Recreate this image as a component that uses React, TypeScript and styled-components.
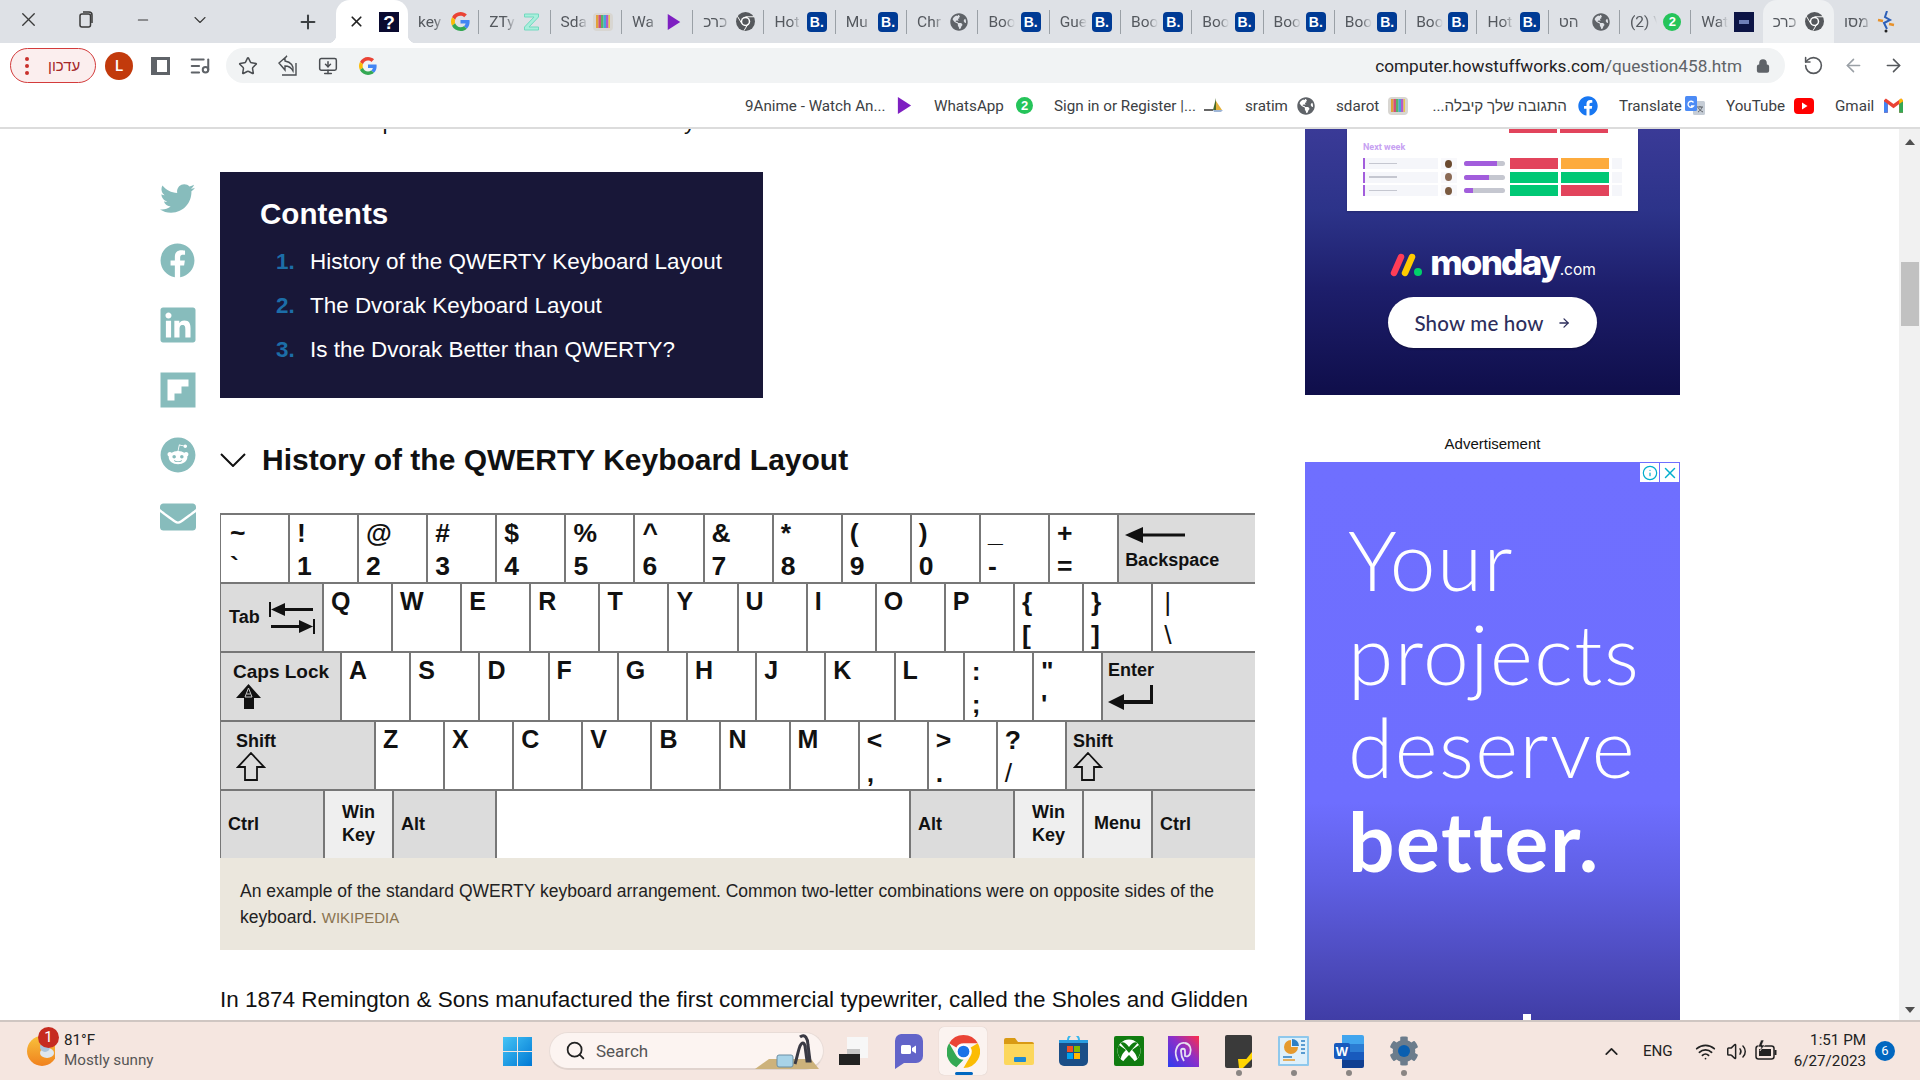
import React from "react";
import styled, { createGlobalStyle } from "styled-components";
import { ChevronDown, ChevronUp, Minus, Plus, X, Star, Lock, RotateCcw, ArrowLeft, ArrowRight, Search as SearchIcon, Volume2, Wifi, MonitorDown, Info, ListMusic, ArrowRight as ShowArrow } from "lucide-react";
import { FaTwitter, FaFacebook, FaLinkedin, FaFlipboard, FaReddit, FaEnvelope, FaGlobeAmericas, FaCog } from "react-icons/fa";

const GlobalStyle = createGlobalStyle`
  html, body { margin: 0; padding: 0; background: #fff; overflow: hidden; }
  * { box-sizing: border-box; }
  body { font-family: "Liberation Sans", Arial, sans-serif; }
`;

const ui = `Roboto, "Liberation Sans", sans-serif`;

const Page = styled.div`
  width: 1920px; height: 1080px; display: flex; flex-direction: column; overflow: hidden; background: #fff;
`;

/* ---------- tab strip ---------- */
const TabStrip = styled.div`
  height: 43px; flex: none; display: flex; align-items: stretch; background: #dee1e6; color: #3c4043; font-family: ${ui};
`;
const WinButton = styled.div`
  width: 57px; display: flex; align-items: center; justify-content: center; color: #3a3a3a; padding-bottom: 4px;
`;
const NewTab = styled.div`
  width: 40px; margin: 0 8px 0 60px; display: flex; align-items: center; justify-content: center; color: #3c4043;
`;
const ActiveTab = styled.div`
  position: relative; flex: 0 0 72px; background: #fff; border-radius: 14px 14px 0 0; display: flex; align-items: center; padding: 0 9px 0 12px; justify-content: space-between;
  &::before, &::after { content: ""; position: absolute; bottom: 0; width: 8px; height: 8px; }
  &::before { left: -8px; background: radial-gradient(circle at 0 0, transparent 8px, #fff 8.5px); }
  &::after { right: -8px; background: radial-gradient(circle at 100% 0, transparent 8px, #fff 8.5px); }
`;
const QuestionFav = styled.span`
  width: 20px; height: 20px; background: #0a0a30; color: #fff; font: 700 19px/22px "Liberation Sans", sans-serif; text-align: center; overflow: hidden;
`;
const Tab = styled.div<{ $light?: boolean; $plain?: boolean }>`
  position: relative; flex: 0 0 71.3px; display: flex; align-items: center; justify-content: space-between; padding: 0 9px 0 10px;
  background: ${(p) => (p.$light ? "#eef0f2" : "transparent")};
  border-radius: ${(p) => (p.$light ? "14px 14px 0 0" : "0")};
  &::after {
    content: ""; position: absolute; right: 0; top: 10px; height: 24px; width: 1px;
    background: ${(p) => (p.$light || p.$plain ? "transparent" : "#9aa0a6")};
  }
`;
const TabTitle = styled.span`
  width: 27px; overflow: hidden; white-space: nowrap; font-size: 15.5px; color: #54585e;
  -webkit-mask-image: linear-gradient(to right, #000 60%, transparent 100%);
  mask-image: linear-gradient(to right, #000 60%, transparent 100%);
`;
const BookingFav = styled.span`
  width: 20px; height: 20px; flex: none; border-radius: 4px; background: #003b95; color: #fff; font: 700 14px/20px "Liberation Sans", sans-serif; text-align: center;
`;
const WaBadge = styled.span<{ $size?: number }>`
  width: ${(p) => p.$size ?? 18}px; height: ${(p) => p.$size ?? 18}px; flex: none; border-radius: 50%; background: #25c45a; color: #fff; font: 700 13px/${(p) => p.$size ?? 18}px "Liberation Sans", sans-serif; text-align: center;
`;
const FavSlot = styled.span`
  width: 20px; height: 20px; flex: none; display: flex; align-items: center; justify-content: center;
`;

/* ---------- toolbar ---------- */
const Toolbar = styled.div`
  height: 45px; flex: none; display: flex; align-items: center; padding: 0 7px 0 10px; background: #fff; font-family: ${ui};
`;
const UpdatePill = styled.div`
  width: 86px; height: 35px; border: 1.5px solid #d33b3b; border-radius: 18px; background: #fbeeee; color: #a52727; display: flex; align-items: center; padding-left: 14px; gap: 19px; font: 15px "Liberation Sans", sans-serif;
`;
const PillDots = styled.span`
  display: flex; flex-direction: column; gap: 3px;
  i { width: 4px; height: 4px; border-radius: 50%; background: #c9302c; display: block; }
`;
const Avatar = styled.div`
  width: 28px; height: 28px; margin-left: 9px; border-radius: 50%; background: #c23a0c; color: #fff; font: 500 15px/28px ${ui}; text-align: center;
`;
const ToolButton = styled.div`
  width: 39px; display: flex; align-items: center; justify-content: center; color: #5f6368;
`;
const NavButton = styled.div<{ $muted?: boolean }>`
  width: 40px; display: flex; align-items: center; justify-content: center; color: ${(p) => (p.$muted ? "#9aa0a6" : "#55585c")};
`;
const ToolGroup = styled.div`
  display: flex; margin-left: 8px;
`;
const Omnibox = styled.div`
  flex: 1; height: 35px; margin: 0 8px 0 7px; padding: 0 15px 0 2px; border-radius: 18px; background: #f1f3f4; display: flex; align-items: center; color: #4a4d51;
`;
const OmniIcon = styled.div`
  width: 40px; display: flex; align-items: center; justify-content: center;
`;
const Url = styled.div`
  margin-left: auto; font-size: 17.2px; white-space: nowrap; color: #1f2124;
  span { color: #5f6368; }
`;
const LockBox = styled.div`
  margin-left: 14px; color: #5f6368; display: flex;
`;

/* ---------- bookmarks ---------- */
const Bookmarks = styled.div`
  height: 41px; flex: none; display: flex; align-items: center; justify-content: flex-end; padding: 0 17px 4px 0; border-bottom: 2px solid #dcdcdc; font-family: ${ui}; background: #fff;
`;
const Bookmark = styled.div`
  display: flex; align-items: center; gap: 11px; margin-left: 21px;
`;
const BookmarkLabel = styled.span<{ $w: number }>`
  width: ${(p) => p.$w}px; font-size: 15.2px; color: #3c4043; white-space: nowrap;
`;

/* ---------- main ---------- */
const Main = styled.div`
  flex: 1; min-height: 0; display: flex; overflow: hidden; padding-left: 160px; background: #fff;
`;
const ShareRail = styled.div`
  width: 35px; flex: none; display: flex; flex-direction: column; align-items: center; gap: 30px; padding-top: 55px; color: #87bcbc;
`;
const ShareIcon = styled.div<{ $h: number }>`
  height: ${(p) => p.$h}px; width: 35px; flex: none; display: flex; align-items: center; justify-content: center; svg { flex: none; }
`;
const Article = styled.div`
  width: 1035px; flex: none; margin: -20px 0 0 25px; color: #111;
`;
const LeadLine = styled.p`
  margin: 0; height: 26px; font-size: 22.5px; line-height: 26px; white-space: nowrap;
`;
const Contents = styled.nav`
  width: 543px; height: 226px; margin-top: 37px; padding: 22px 0 0 40px; background: #181738; color: #fff;
`;
const ContentsTitle = styled.h2`
  margin: 0 0 6px; font-size: 29.6px; line-height: 40px; font-weight: 700;
`;
const ContentsList = styled.ol`
  list-style: none; margin: 0; padding: 0 0 0 16px;
`;
const ContentsItem = styled.li`
  display: flex; height: 44px; align-items: center; font-size: 22.45px;
  b { width: 34px; color: #1c6ea8; font-weight: 700; }
`;
const SectionHeading = styled.div`
  display: flex; align-items: center; height: 40px; margin-top: 42px; gap: 16px;
  h3 { margin: 0; font-size: 30px; line-height: 40px; font-weight: 700; color: #111; }
`;
const Figure = styled.figure`
  margin: 33px 0 0; width: 1035px;
`;
const Keyboard = styled.div`
  height: 345px; overflow: hidden; border-top: 2px solid #777; border-left: 1px solid #777; background: #fff; color: #111;
  display: flex; flex-direction: column;
`;
const KeyRow = styled.div`
  height: 69px; flex: none; display: flex; border-bottom: 2px solid #777;
`;
const Key = styled.div<{ $w?: number; $tone?: "gray" | "light"; $last?: boolean; $pad?: number }>`
  flex: ${(p) => (p.$last ? "1 1 0" : `0 0 ${p.$w ?? 69.1}px`)};
  min-width: 0;
  border-right: ${(p) => (p.$last ? "none" : "2px solid #777")};
  background: ${(p) => (p.$tone === "gray" ? "#dcdcdc" : p.$tone === "light" ? "#efefef" : "#fff")};
  padding-left: ${(p) => p.$pad ?? 7}px; font-weight: 700; position: relative;
`;
const Letter = styled.div`
  font-size: 25px; line-height: 30px; padding-top: 2px;
`;
const Stacked = styled.div`
  display: flex; flex-direction: column; font-size: 26.5px; line-height: 33px; padding-top: 2px;
`;
const ThinMark = styled.span`
  font-weight: 400;
`;
const FnLabel = styled.div<{ $size?: number }>`
  font-size: ${(p) => p.$size ?? 18}px; line-height: 22px;
`;
const FnStack = styled.div<{ $pad?: number; $gap?: number; $left?: number }>`
  display: flex; flex-direction: column; align-items: flex-start; gap: ${(p) => p.$gap ?? 3}px; padding-top: ${(p) => p.$pad ?? 6}px; margin-left: ${(p) => p.$left ?? 2}px;
`;
const CapsIconBox = styled.div`
  display: flex; margin: 1px 0 0 3px;
`;
const TabFace = styled.div`
  display: flex; align-items: center; height: 100%; gap: 9px; padding-left: 1px; font-size: 18px;
`;
const BottomCenter = styled.div`
  display: flex; align-items: center; height: 100%; font-size: 18px;
`;
const WinFace = styled.div`
  height: 100%; margin-left: -7px; display: flex; flex-direction: column; align-items: center; justify-content: center; font-size: 18px; line-height: 23px; padding-bottom: 2px;
`;
const Caption = styled.figcaption`
  height: 92px; padding: 20px 20px 0; background: #ebe7dd; font-size: 17.5px; line-height: 26px; color: #222;
  a { color: #8a7450; font-size: 15px; }
`;
const BodyText = styled.p`
  margin: 32px 0 0; font-size: 22.5px; line-height: 36px; white-space: nowrap; color: #111;
`;

/* ---------- ads ---------- */
const Aside = styled.aside`
  width: 375px; flex: none; margin-left: 50px; display: flex; flex-direction: column;
`;
const MondayAd = styled.div`
  height: 266px; flex: none; display: flex; flex-direction: column; align-items: center; background: linear-gradient(#3a3a97 0%, #2c3389 31%, #1d1e6b 60%, #0f0e4a 100%);
`;
const AdCard = styled.div`
  width: 291px; height: 82px; background: #fff; padding: 0 16px; display: flex; flex-direction: column; box-shadow: 0 1px 2px rgba(0,0,0,.2);
`;
const NextWeek = styled.div`
  font: 700 9px/12px Roboto, sans-serif; color: #c7a1f2; margin-top: 2px; height: 23px; padding-top: 6px;
`;
const TopStatus = styled.div`
  display: flex; height: 4px; margin-left: 146px; gap: 3px;
  i { width: 48px; background: #e2445c; display: block; }
`;
const BoardRow = styled.div`
  display: flex; height: 11px; align-items: stretch; margin-bottom: 2.5px; gap: 3px;
`;
const BoardName = styled.div`
  width: 75px; border-left: 2px solid #a25ddc; background: #f5f6fa; display: flex; align-items: center; padding-left: 4px;
  i { width: 28px; height: 1.5px; background: #c5c7d0; display: block; }
`;
const BoardFace = styled.div<{ $c: string }>`
  width: 16px; display: flex; align-items: center; justify-content: center; background: #f8f8fb;
  i { width: 7px; height: 8px; border-radius: 50%; background: ${(p) => p.$c}; display: block; }
`;
const BoardProgress = styled.div`
  width: 42px; height: 5px; margin: 3px 2px 0 4px; background: #c5c7d0; border-radius: 3px; overflow: hidden;
`;
const BoardFill = styled.div`
  height: 100%; background: #a25ddc;
`;
const BoardCell = styled.div<{ $c: string }>`
  width: 48px; background: ${(p) => p.$c};
`;
const BoardEnd = styled.div`
  width: 10px; background: #f5f6fa;
`;
const MondayLogo = styled.div`
  display: flex; align-items: baseline; margin-top: 29px; height: 44px; color: #fff; gap: 0;
  svg { align-self: center; margin-right: 7px; margin-top: 6px; }
  b { font: 800 35px/44px Inter, sans-serif; letter-spacing: -1.8px; }
  span { font: 400 15.5px/20px Inter, sans-serif; }
`;
const ShowButton = styled.div`
  width: 209px; height: 51px; margin-top: 13px; border-radius: 26px; background: #fff; color: #2d2e5c; display: flex; align-items: center; justify-content: center; gap: 13px; font: 500 20.5px Lato, sans-serif; letter-spacing: .2px; box-shadow: 0 1px 2px rgba(0,0,0,.3);
`;
const AdLabel = styled.div`
  height: 67px; flex: none; padding-top: 39px; text-align: center; font-size: 15px; line-height: 20px; color: #111;
`;
const ProjectsAd = styled.div`
  position: relative; flex: 1; min-height: 0; padding: 51px 0 0 43px; color: #fff; overflow: hidden;
  background: linear-gradient(#6f6fff 0%, #6e6eff 61%, #5f5fe4 75%, #4d4bbd 90%, #403da6 100%);
  font-family: Lato, sans-serif; font-size: 82px; line-height: 93.5px; font-weight: 300; letter-spacing: 1.5px;
`;
const AdLine = styled.div<{ $bold?: boolean }>`
  font-weight: ${(p) => (p.$bold ? 700 : 300)}; white-space: nowrap;
`;
const AdStub = styled.div`
  position: absolute; left: 218px; bottom: 0; width: 8px; height: 6px; background: #fff;
`;
const AdChoices = styled.div`
  position: absolute; top: 1px; right: 1px; display: flex; gap: 1px;
`;
const AdChoice = styled.div`
  width: 19px; height: 19px; background: #fff; color: #00aecd; display: flex; align-items: center; justify-content: center;
`;

/* ---------- scrollbar ---------- */
const Scrollbar = styled.div`
  width: 21px; flex: none; margin-left: auto; background: #f1f1f1; display: flex; flex-direction: column; align-items: center;
`;
const ScrollUp = styled.div`
  width: 0; height: 0; margin-top: 10px; border: 5px solid transparent; border-top: 0; border-bottom: 6px solid #505050;
`;
const ScrollThumb = styled.div`
  width: 18px; height: 64px; margin-top: 117px; background: #c1c1c1;
`;
const ScrollDown = styled.div`
  width: 0; height: 0; margin-top: auto; margin-bottom: 7px; border: 5px solid transparent; border-bottom: 0; border-top: 6px solid #505050;
`;

/* ---------- taskbar ---------- */
const Taskbar = styled.div`
  height: 60px; flex: none; display: flex; align-items: center; background: #f5e6e0; border-top: 2px solid #cfc6c2; font-family: ${ui}; color: #222; position: relative;
`;
const Weather = styled.div`
  width: 503px; flex: none; display: flex; align-items: center; padding-left: 27px; gap: 9px; position: relative;
`;
const WeatherBadge = styled.div`
  position: absolute; left: 38px; top: -3px; width: 21px; height: 21px; border-radius: 50%; background: #c62b20; color: #fff; font: 400 15px/21px ${ui}; text-align: center;
`;
const WeatherText = styled.div`
  display: flex; flex-direction: column; font-size: 15.2px; line-height: 20px; padding-bottom: 2px;
  small { font-size: 15.2px; color: #555; }
`;
const SearchBox = styled.div`
  width: 275px; height: 38px; margin: 0 2px 0 17px; border-radius: 19px; background: #fcf4f1; border: 1px solid #e8dcd7; border-bottom: 2px solid #e0d3ce; display: flex; align-items: center; padding-left: 15px; gap: 10px; font-size: 17px; color: #555; position: relative;
  svg.art { position: absolute; right: 2px; top: 0; }
`;
const TaskSlot = styled.div<{ $active?: boolean }>`
  width: 55px; height: 48px; position: relative; display: flex; align-items: center; justify-content: center;
  ${(p) => p.$active && `&::before { content: ""; position: absolute; left: 3px; right: 4px; top: 0; bottom: 0; background: #fbf3f0; border-radius: 5px; box-shadow: 0 0 1px rgba(0,0,0,.2);} svg { position: relative; }`}
`;
const RunDot = styled.span`
  position: absolute; left: 50%; bottom: -1px; width: 6px; height: 6px; margin-left: -3px; border-radius: 50%; background: #8a8583;
`;
const ActiveBar = styled.span`
  position: absolute; left: 50%; bottom: 0; width: 18px; height: 3px; margin-left: -9px; border-radius: 2px; background: #0067c0;
`;
const GearBox = styled.span`
  position: relative; display: flex;
  i { position: absolute; left: 9px; top: 9px; width: 12px; height: 12px; border-radius: 50%; background: #0a5fb0; }
`;
const Tray = styled.div`
  flex: 1; display: flex; align-items: center; justify-content: flex-end; padding-right: 25px; color: #222;
`;
const TrayItem = styled.div<{ $ml: number }>`
  margin-left: ${(p) => p.$ml}px; display: flex; align-items: center;
`;
const Lang = styled.span`
  font-size: 15.2px; margin-left: 21px;
`;
const Clock = styled.div`
  margin-left: 17px; display: flex; flex-direction: column; align-items: flex-end; font-size: 15.2px; line-height: 21px;
`;
const NotifBadge = styled.div`
  margin-left: 9px; width: 20px; height: 20px; border-radius: 50%; background: #0067c0; color: #fff; font: 400 13px/20px ${ui}; text-align: center;
`;

/* ---------- drawings ---------- */
const GoogleG = ({ s = 18 }: { s?: number }) => (
  <svg width={s} height={s} viewBox="0 0 48 48">
    <path fill="#EA4335" d="M24 9.5c3.54 0 6.71 1.22 9.21 3.6l6.85-6.85C35.9 2.38 30.47 0 24 0 14.62 0 6.51 5.38 2.56 13.22l7.98 6.19C12.43 13.72 17.74 9.5 24 9.5z" />
    <path fill="#4285F4" d="M46.98 24.55c0-1.57-.15-3.09-.38-4.55H24v9.02h12.94c-.58 2.96-2.26 5.48-4.78 7.18l7.73 6c4.51-4.18 7.09-10.36 7.09-17.65z" />
    <path fill="#FBBC05" d="M10.53 28.59c-.48-1.45-.76-2.99-.76-4.59s.27-3.14.76-4.59l-7.98-6.19C.92 16.46 0 20.12 0 24c0 3.88.92 7.54 2.56 10.78l7.97-6.19z" />
    <path fill="#34A853" d="M24 48c6.48 0 11.93-2.13 15.89-5.81l-7.73-6c-2.15 1.45-4.92 2.3-8.16 2.3-6.26 0-11.57-4.22-13.47-9.91l-7.98 6.19C6.51 42.62 14.62 48 24 48z" />
  </svg>
);
const Play = ({ s = 18 }: { s?: number }) => (
  <svg width={s} height={s} viewBox="0 0 18 18"><path d="M2 0l14 9-14 9z" fill="#7e1fc1" /></svg>
);
const RestoreIcon = () => (
  <svg width="14" height="17" viewBox="0 0 14 17">
    <rect x="1" y="3" width="10.500" height="13" rx="2" fill="none" stroke="#3a3a3a" strokeWidth="1.500" />
    <path d="M4 1h6a3 3 0 0 1 3 3v8" fill="none" stroke="#3a3a3a" strokeWidth="1.500" />
  </svg>
);
const SidePanelIcon = () => (
  <svg width="19" height="18" viewBox="0 0 19 18">
    <path d="M0 0h19v18H0zM6 3v12h10V3z" fill="#5f6368" fillRule="evenodd" />
  </svg>
);
const ShareBackIcon = () => (
  <svg width="20" height="22" viewBox="0 0 20 22" fill="none" stroke="#4a4d51" strokeWidth="1.400">
    <path d="M9 1L1 8l6 7v-4c3 0 6 1 8 5 1-5-2-9-8-10V3z" />
    <path d="M4 20h14V8" />
  </svg>
);
const ChromeGray = () => (
  <svg width="19" height="19" viewBox="0 0 20 20">
    <circle cx="10" cy="10" r="10" fill="#55585c" />
    <circle cx="10" cy="10" r="5" fill="#fff" />
    <circle cx="10" cy="10" r="3.400" fill="#55585c" />
    <path d="M10 5h9M6 12L1.500 4.500M13 12l-4.500 7.500" stroke="#fff" strokeWidth="1" />
  </svg>
);
const Globe = () => <FaGlobeAmericas size={18} color="#5f6368" />;
const TvIcon = () => (
  <svg width="20" height="20" viewBox="0 0 20 20">
    <rect x="0" y="1" width="20" height="18" rx="4" fill="#d8d6d2" />
    <rect x="3" y="3" width="2.500" height="13" fill="#e2a23a" />
    <rect x="5.500" y="3" width="2.500" height="13" fill="#d14f7c" />
    <rect x="8" y="3" width="2.500" height="13" fill="#58b368" />
    <rect x="10.500" y="3" width="2.500" height="13" fill="#46a6d8" />
    <rect x="13" y="3" width="2.500" height="13" fill="#b45bc8" />
    <rect x="15.500" y="3" width="1.500" height="13" fill="#e8c84a" />
  </svg>
);
const ZFav = () => (
  <svg width="17" height="20" viewBox="0 0 17 20">
    <path d="M1.500 2h14v3L6 15h9.500v3h-14v-3L11 5H1.500z" fill="#a8efdc" stroke="#72d9bf" strokeWidth="1" />
  </svg>
);
const DarkImg = () => (
  <svg width="20" height="20" viewBox="0 0 20 20">
    <rect width="20" height="20" fill="#0c1445" />
    <rect x="5" y="8" width="10" height="4" fill="#6e7fb8" />
  </svg>
);
const SwirlFav = () => (
  <svg width="20" height="22" viewBox="0 0 20 22">
    <path d="M11 0l-2 6 5 3-6 3 3 6" stroke="#2c5fb8" strokeWidth="2" fill="none" />
    <path d="M2 9l5 1M13 13l5 1" stroke="#e8912a" strokeWidth="2.500" />
    <circle cx="10" cy="20" r="1.500" fill="#222" />
  </svg>
);
const SignInIcon = () => (
  <svg width="20" height="18" viewBox="0 0 20 18">
    <path d="M0 13h9" stroke="#333" strokeWidth="1.500" />
    <path d="M12 1l-3 12h3z" fill="#4a6b2a" />
    <path d="M12 4l6 9h-6z" fill="#e3b23c" />
    <path d="M9 13h10l-2 2h-7z" fill="#9fb6d6" />
  </svg>
);
const TranslateIcon = () => (
  <svg width="20" height="20" viewBox="0 0 20 20">
    <rect x="8" y="5" width="12" height="14" rx="1.500" fill="#c6cdd6" />
    <rect x="0" y="0" width="12" height="15" rx="1.500" fill="#4c8bf5" />
    <path d="M8.500 6.500A3 3 0 1 0 8.500 10H6" stroke="#fff" strokeWidth="1.300" fill="none" />
    <path d="M12 11h6M15 10v1M13 16c2-1 3.500-3 4-5M13.500 12c1 2 2.500 3 4.500 4" stroke="#5f6368" strokeWidth="1" fill="none" />
  </svg>
);
const YouTubeIcon = () => (
  <svg width="20" height="16" viewBox="0 0 20 16">
    <rect width="20" height="16" rx="4" fill="#f00" />
    <path d="M8 4.500l5.500 3.500L8 11.500z" fill="#fff" />
  </svg>
);
const GmailIcon = () => (
  <svg width="19" height="15" viewBox="0 0 20 15">
    <path d="M0 2v13h4V6l6 4.500L16 6v9h4V2l-2-2-8 6-8-6z" fill="#ea4335" />
    <path d="M0 15h4V6L0 3z" fill="#4285f4" />
    <path d="M16 15h4V3l-4 3z" fill="#34a853" />
    <path d="M16 1.500L18 0l2 2v1l-4 3z" fill="#fbbc04" />
  </svg>
);
const TabKeyArrows = () => (
  <svg width="46" height="34" viewBox="0 0 46 34">
    <path d="M0 1h2v15H0zM2 8.500L16 2v5h28v3H16v5z" fill="#111" />
    <path d="M44 18h2v15h-2zM44 25.500L30 19v5H2v3h28v5z" fill="#111" />
  </svg>
);
const CapsArrow = () => (
  <svg width="25" height="25" viewBox="0 0 25 25">
    <path d="M12.500 0L25 14h-7v11H8V14H0z" fill="#111" />
    <path d="M12.500 4l-3.500 9h7zM10.500 10h4" fill="none" stroke="#ccc" strokeWidth="1" />
  </svg>
);
const ShiftArrow = () => (
  <svg width="30" height="29" viewBox="0 0 30 29">
    <path d="M15 1L28 15h-7v13H9V15H2z" fill="none" stroke="#111" strokeWidth="1.800" strokeLinejoin="miter" />
  </svg>
);
const BackArrow = () => (
  <svg width="60" height="18" viewBox="0 0 60 18">
    <path d="M0 9L18 1v6.500h42v3H18V17z" fill="#111" />
  </svg>
);
const EnterArrow = () => (
  <svg width="45" height="25" viewBox="0 0 45 25">
    <path d="M0 17L16 9v6h26V0h3v19H16v6z" fill="#111" />
  </svg>
);
const SectionChevron = () => (
  <svg width="26" height="14" viewBox="0 0 26 14">
    <path d="M1 1l12 12L25 1" fill="none" stroke="#111" strokeWidth="2" />
  </svg>
);
const MondayMark = () => (
  <svg width="34" height="24" viewBox="0 0 34 24">
    <line x1="5" y1="20" x2="12" y2="4" stroke="#ff3d57" strokeWidth="6.500" strokeLinecap="round" />
    <line x1="16" y1="20" x2="23" y2="4" stroke="#ffcb00" strokeWidth="6.500" strokeLinecap="round" />
    <circle cx="29" cy="19" r="4" fill="#00d26a" />
  </svg>
);
const SunCloud = () => (
  <svg width="28" height="34" viewBox="0 0 28 34">
    <defs><linearGradient id="sun" x1="0" y1="0" x2="0" y2="1"><stop offset="0" stopColor="#f8c23c" /><stop offset="1" stopColor="#f0811e" /></linearGradient></defs>
    <circle cx="15" cy="17" r="15" fill="url(#sun)" />
    <ellipse cx="20" cy="19" rx="7" ry="5" fill="#dfe7ef" />
    <ellipse cx="18" cy="13" rx="5" ry="5" fill="#a9c4de" />
  </svg>
);
const WindowsLogo = () => (
  <svg width="29" height="29" viewBox="0 0 29 29">
    <defs><linearGradient id="win" x1="0" y1="0" x2="1" y2="1"><stop offset="0" stopColor="#45c4f5" /><stop offset="1" stopColor="#0078d4" /></linearGradient></defs>
    <path d="M0 0h14v14H0zM15 0h14v14H15zM0 15h14v14H0zM15 15h14v14H15z" fill="url(#win)" />
  </svg>
);
const VacuumArt = () => (
  <svg className="art" width="66" height="36" viewBox="0 0 66 36">
    <path d="M0 36l14-10h42l8 10z" fill="#cdb27b" />
    <path d="M45 4c5-4 8 2 8 8l2 16h-3l-2-15c-1-4-3-4-5 0-2 5-3 12-5 18" stroke="#3a3a44" strokeWidth="3" fill="none" />
    <rect x="22" y="22" width="16" height="12" rx="2" fill="#a8d3e8" stroke="#6a8ea3" />
  </svg>
);
const TaskViewIcon = () => (
  <svg width="29" height="28" viewBox="0 0 29 28">
    <rect x="8" y="0" width="21" height="21" fill="#f7f7f7" />
    <rect x="8" y="12" width="13" height="9" fill="#c6c6c6" />
    <rect x="0" y="17" width="21" height="11" fill="#222" />
  </svg>
);
const MeetIcon = () => (
  <svg width="29" height="35" viewBox="0 0 29 35">
    <path d="M7 0h15a7 7 0 0 1 7 7v15a7 7 0 0 1-7 7H10l-9 6v-28a7 7 0 0 1 6-7z" fill="#6264c9" />
    <rect x="7" y="11" width="10" height="9" rx="1.500" fill="#fff" />
    <path d="M18 14l4-2.500v8l-4-2.500z" fill="#fff" />
  </svg>
);
const ChromeColor = () => (
  <svg width="33" height="33" viewBox="0 0 48 48">
    <path d="M24 0a24 24 0 0 1 20.800 12H24a12 12 0 0 0-10.400 6L3.200 12A24 24 0 0 1 24 0z" fill="#ea4335" />
    <path d="M3.200 12l10.400 18a12 12 0 0 0 10.400 6l-10.400 10.800A24 24 0 0 1 3.200 12z" fill="#34a853" />
    <path d="M44.800 12A24 24 0 0 1 24 48l10.400-18a12 12 0 0 0 0-12z" fill="#fbbc04" />
    <circle cx="24" cy="24" r="11" fill="#fff" />
    <circle cx="24" cy="24" r="8.500" fill="#1a73e8" />
  </svg>
);
const FolderIcon = () => (
  <svg width="30" height="27" viewBox="0 0 30 27">
    <path d="M0 2a2 2 0 0 1 2-2h9l3 4h14a2 2 0 0 1 2 2v4H0z" fill="#d99a14" />
    <path d="M0 6h30v19a2 2 0 0 1-2 2H2a2 2 0 0 1-2-2z" fill="#fcd75c" />
    <rect x="10" y="19" width="12" height="5" rx="1" fill="#1f8ad2" />
  </svg>
);
const StoreIcon = () => (
  <svg width="29" height="30" viewBox="0 0 29 30">
    <path d="M9 4a5 5 0 0 1 11 0" stroke="#35b7ee" strokeWidth="2" fill="none" />
    <path d="M0 4h29v21a5 5 0 0 1-5 5H5a5 5 0 0 1-5-5z" fill="#1a4e87" />
    <path d="M0 4h29v3H0z" fill="#2a9de0" />
    <rect x="8" y="10" width="6" height="6" fill="#f25022" />
    <rect x="15" y="10" width="6" height="6" fill="#7fba00" />
    <rect x="8" y="17" width="6" height="6" fill="#00a4ef" />
    <rect x="15" y="17" width="6" height="6" fill="#ffb900" />
  </svg>
);
const XboxIcon = () => (
  <svg width="30" height="30" viewBox="0 0 30 30">
    <rect width="30" height="30" rx="2" fill="#107c10" />
    <circle cx="15" cy="15" r="11.500" fill="#fff" />
    <path d="M15 11C12 7 9 5 6.500 7c2.500 3 6 7 8.500 10 2.500-3 6-7 8.500-10C21 5 18 7 15 11zM15 19c-3 3-6 6-6 7 3 2 9 2 12 0 0-1-3-4-6-7zM5 9c-3 5-1 11 2 14 0-4 3-7 5-9zM25 9c3 5 1 11-2 14 0-4-3-7-5-9z" fill="#107c10" />
  </svg>
);
const PurpleApp = () => (
  <svg width="31" height="31" viewBox="0 0 31 31">
    <defs><linearGradient id="pa" x1="0" y1="1" x2="1" y2="0"><stop offset="0" stopColor="#2b3df0" /><stop offset=".55" stopColor="#8b2fc9" /><stop offset="1" stopColor="#ff2d4a" /></linearGradient></defs>
    <rect width="31" height="31" fill="url(#pa)" />
    <path d="M10 25c-2-4-3-7-2-11 1-5 5-8 9-7 5 1 7 6 5 11-1 2-3 3-5 2v-5c0-3-4-3-4 0 0 3 1 7 3 10" stroke="#e6e0f2" strokeWidth="1.800" fill="none" />
  </svg>
);
const StickyIcon = () => (
  <svg width="27" height="33" viewBox="0 0 27 33">
    <rect width="27" height="33" rx="2" fill="#3a3a3a" />
    <path d="M27 17L14 33l-1-9 1 0h13z" fill="#ffd400" />
    <path d="M14 24h13l-9 9h-4z" fill="#ffd400" />
  </svg>
);
const ChartApp = () => (
  <svg width="31" height="30" viewBox="0 0 31 30">
    <rect width="31" height="30" rx="1" fill="#8fc8ec" />
    <rect x="2" y="2" width="27" height="26" fill="#dff0fa" />
    <path d="M13 4a7 7 0 1 0 7 7h-7z" fill="#e59a2e" />
    <path d="M14 3a7 7 0 0 1 7 7h-7z" fill="#2c7fc4" />
    <path d="M23 5h4M23 9h4M23 13h4M23 17h4M5 21h9" stroke="#2c7fc4" strokeWidth="1.500" />
    <path d="M5 24h12" stroke="#e59a2e" strokeWidth="1.500" />
  </svg>
);
const WordIcon = () => (
  <svg width="30" height="33" viewBox="0 0 30 33">
    <path d="M8 0h20a2 2 0 0 1 2 2v7H8z" fill="#41a5ee" />
    <rect x="8" y="9" width="22" height="8" fill="#2b7cd3" />
    <rect x="8" y="17" width="22" height="8" fill="#185abd" />
    <path d="M8 25h22v6a2 2 0 0 1-2 2H8z" fill="#103f91" />
    <rect x="0" y="8" width="16" height="16" rx="2" fill="#185abd" />
    <text x="8" y="20.500" textAnchor="middle" fontFamily="Liberation Sans" fontSize="13" fontWeight="700" fill="#fff">W</text>
  </svg>
);
const GearIcon = () => (
  <GearBox>
    <FaCog size={30} color="#6b7c8c" />
    <i />
  </GearBox>
);
const BatteryIcon = () => (
  <svg width="22" height="22" viewBox="0 0 22 22">
    <rect x="1" y="6" width="18" height="13" rx="2.500" fill="none" stroke="#222" strokeWidth="1.500" />
    <rect x="4" y="9" width="12" height="7" fill="#222" />
    <rect x="19.500" y="10" width="2" height="5" fill="#222" />
    <path d="M6 0L3 7h3l-1 4 5-6H7l2-5z" fill="#222" stroke="#f5e6e0" strokeWidth=".6" />
  </svg>
);

/* ---------- data ---------- */
type Fav = "g" | "z" | "tv" | "play" | "chrome" | "b" | "globe" | "wa" | "dark" | "swirl";
const tabs: { t: string; f: Fav; light?: boolean; plain?: boolean }[] = [
  { t: "key", f: "g" }, { t: "ZTy", f: "z" }, { t: "Sda", f: "tv" }, { t: "Wa", f: "play" },
  { t: "כרכ", f: "chrome" }, { t: "Hot", f: "b" }, { t: "Mu", f: "b" }, { t: "Chr", f: "globe" },
  { t: "Boo", f: "b" }, { t: "Gue", f: "b" }, { t: "Boo", f: "b" }, { t: "Boo", f: "b" },
  { t: "Boo", f: "b" }, { t: "Boo", f: "b" }, { t: "Boo", f: "b" }, { t: "Hot", f: "b" },
  { t: "הט", f: "globe" }, { t: "(2) \\", f: "wa" }, { t: "Wat", f: "dark", plain: true },
  { t: "כרכ", f: "chrome", light: true }, { t: "מסו", f: "swirl", plain: true },
];
const renderFav = (f: Fav) => {
  switch (f) {
    case "g": return <GoogleG s={19} />;
    case "z": return <ZFav />;
    case "tv": return <TvIcon />;
    case "play": return <Play s={16} />;
    case "chrome": return <ChromeGray />;
    case "b": return <BookingFav>B.</BookingFav>;
    case "globe": return <Globe />;
    case "wa": return <WaBadge>2</WaBadge>;
    case "dark": return <DarkImg />;
    case "swirl": return <SwirlFav />;
  }
};
const bookmarks: { t: string; w: number; i: React.ReactNode; rtl?: boolean }[] = [
  { t: "9Anime - Watch An...", w: 140, i: <Play s={17} /> },
  { t: "WhatsApp", w: 71, i: <WaBadge $size={17}>2</WaBadge> },
  { t: "Sign in or Register |...", w: 139, i: <SignInIcon /> },
  { t: "sratim", w: 41, i: <Globe /> },
  { t: "sdarot", w: 41, i: <TvIcon /> },
  { t: "התגובה שלך קיבלה...", w: 138, i: <FaFacebook size={20} color="#1877f2" />, rtl: true },
  { t: "Translate", w: 55, i: <TranslateIcon /> },
  { t: "YouTube", w: 57, i: <YouTubeIcon /> },
  { t: "Gmail", w: 38, i: <GmailIcon /> },
];
const board = [
  { face: "#6b4a2f", fill: 80, a: "#e2445c", b: "#fdab3d" },
  { face: "#8a6a55", fill: 60, a: "#00c875", b: "#00c875" },
  { face: "#7a5a40", fill: 22, a: "#00c875", b: "#e2445c" },
];

const numberRow = [["!", "1"], ["@", "2"], ["#", "3"], ["$", "4"], ["%", "5"], ["^", "6"], ["&", "7"], ["*", "8"], ["(", "9"], [")", "0"], ["_", "-"], ["+", "="]];
const qRow = ["Q", "W", "E", "R", "T", "Y", "U", "I", "O", "P"];
const aRow = ["A", "S", "D", "F", "G", "H", "J", "K", "L"];
const zRow = ["Z", "X", "C", "V", "B", "N", "M"];
const Pair = ({ a, b }: { a: string; b: string }) => (
  <Stacked><span>{a}</span><span>{b}</span></Stacked>
);

export default function App() {
  return (
    <Page>
      <GlobalStyle />
      <TabStrip>
        <WinButton><X size={23} strokeWidth={1.4} /></WinButton>
        <WinButton><RestoreIcon /></WinButton>
        <WinButton><Minus size={16} strokeWidth={1.6} /></WinButton>
        <WinButton><ChevronDown size={20} strokeWidth={1.3} /></WinButton>
        <NewTab><Plus size={22} strokeWidth={2.2} /></NewTab>
        <ActiveTab>
          <X size={17} strokeWidth={2.4} color="#222" />
          <QuestionFav>?</QuestionFav>
        </ActiveTab>
        {tabs.map((t, i) => (
          <Tab key={i} $light={t.light} $plain={t.plain}>
            <TabTitle>{t.t}</TabTitle>
            <FavSlot>{renderFav(t.f)}</FavSlot>
          </Tab>
        ))}
      </TabStrip>

      <Toolbar>
        <UpdatePill>
          <PillDots><i /><i /><i /></PillDots>
          <span>עדכון</span>
        </UpdatePill>
        <Avatar>L</Avatar>
        <ToolGroup>
          <ToolButton><SidePanelIcon /></ToolButton>
          <ToolButton><ListMusic size={22} strokeWidth={2.2} /></ToolButton>
        </ToolGroup>
        <Omnibox>
          <OmniIcon><Star size={20} strokeWidth={1.8} /></OmniIcon>
          <OmniIcon><ShareBackIcon /></OmniIcon>
          <OmniIcon><MonitorDown size={20} strokeWidth={1.8} /></OmniIcon>
          <OmniIcon><GoogleG s={18} /></OmniIcon>
          <Url>computer.howstuffworks.com<span>/question458.htm</span></Url>
          <LockBox><Lock size={14} strokeWidth={3} fill="#5f6368" /></LockBox>
        </Omnibox>
        <NavButton><RotateCcw size={21} strokeWidth={1.8} /></NavButton>
        <NavButton $muted><ArrowLeft size={21} strokeWidth={1.8} /></NavButton>
        <NavButton><ArrowRight size={21} strokeWidth={1.8} /></NavButton>
      </Toolbar>

      <Bookmarks>
        {bookmarks.map((b, i) => (
          <Bookmark key={i}>
            <BookmarkLabel $w={b.w} dir={b.rtl ? "rtl" : undefined}>{b.t}</BookmarkLabel>
            {b.i}
          </Bookmark>
        ))}
      </Bookmarks>

      <Main>
        <ShareRail>
          <ShareIcon $h={29}><FaTwitter size={35} /></ShareIcon>
          <ShareIcon $h={34}><FaFacebook size={35} /></ShareIcon>
          <ShareIcon $h={35}><FaLinkedin size={40} /></ShareIcon>
          <ShareIcon $h={35}><FaFlipboard size={40} /></ShareIcon>
          <ShareIcon $h={36}><FaReddit size={36} /></ShareIcon>
          <ShareIcon $h={27}><FaEnvelope size={36} /></ShareIcon>
        </ShareRail>

        <Article>
          <LeadLine>So look at the top row of letters on a desk today</LeadLine>
          <Contents>
            <ContentsTitle>Contents</ContentsTitle>
            <ContentsList>
              <ContentsItem><b>1.</b>History of the QWERTY Keyboard Layout</ContentsItem>
              <ContentsItem><b>2.</b>The Dvorak Keyboard Layout</ContentsItem>
              <ContentsItem><b>3.</b>Is the Dvorak Better than QWERTY?</ContentsItem>
            </ContentsList>
          </Contents>
          <SectionHeading>
            <SectionChevron />
            <h3>History of the QWERTY Keyboard Layout</h3>
          </SectionHeading>
          <Figure>
            <Keyboard>
              <KeyRow>
                <Key $w={69} $pad={9}><Stacked><span>~</span><span>`</span></Stacked></Key>
                {numberRow.map(([a, b]) => <Key key={b}><Pair a={a} b={b} /></Key>)}
                <Key $tone="gray" $last>
                  <FnStack $pad={11} $gap={5} $left={-1}>
                    <BackArrow />
                    <FnLabel>Backspace</FnLabel>
                  </FnStack>
                </Key>
              </KeyRow>
              <KeyRow>
                <Key $w={103} $tone="gray"><TabFace>Tab<TabKeyArrows /></TabFace></Key>
                {qRow.map((k) => <Key key={k}><Letter>{k}</Letter></Key>)}
                <Key><Pair a="{" b="[" /></Key>
                <Key><Pair a="}" b="]" /></Key>
                <Key $last $pad={11}><Stacked><ThinMark>|</ThinMark><ThinMark>\</ThinMark></Stacked></Key>
              </KeyRow>
              <KeyRow>
                <Key $w={121} $tone="gray">
                  <FnStack $pad={8} $gap={0} $left={5}>
                    <FnLabel $size={19}>Caps Lock</FnLabel>
                    <CapsIconBox><CapsArrow /></CapsIconBox>
                  </FnStack>
                </Key>
                {aRow.map((k) => <Key key={k} $w={69.2}><Letter>{k}</Letter></Key>)}
                <Key $w={69.2}><Pair a=":" b=";" /></Key>
                <Key $w={69.2}><Pair a={'"'} b="'" /></Key>
                <Key $tone="gray" $last>
                  <FnStack $pad={6} $gap={4} $left={-2}>
                    <FnLabel>Enter</FnLabel>
                    <EnterArrow />
                  </FnStack>
                </Key>
              </KeyRow>
              <KeyRow>
                <Key $w={155} $tone="gray">
                  <FnStack $pad={8} $gap={0} $left={8}>
                    <FnLabel>Shift</FnLabel>
                    <ShiftArrow />
                  </FnStack>
                </Key>
                {zRow.map((k) => <Key key={k}><Letter>{k}</Letter></Key>)}
                <Key><Pair a="<" b="," /></Key>
                <Key><Pair a=">" b="." /></Key>
                <Key><Stacked><span>?</span><ThinMark>/</ThinMark></Stacked></Key>
                <Key $tone="gray" $last>
                  <FnStack $pad={8} $gap={0} $left={-1}>
                    <FnLabel>Shift</FnLabel>
                    <ShiftArrow />
                  </FnStack>
                </Key>
              </KeyRow>
              <KeyRow>
                <Key $w={104} $tone="gray"><BottomCenter>Ctrl</BottomCenter></Key>
                <Key $w={69} $tone="light"><WinFace><span>Win</span><span>Key</span></WinFace></Key>
                <Key $w={103} $tone="gray"><BottomCenter>Alt</BottomCenter></Key>
                <Key $w={414} />
                <Key $w={104} $tone="gray"><BottomCenter>Alt</BottomCenter></Key>
                <Key $w={69} $tone="light"><WinFace><span>Win</span><span>Key</span></WinFace></Key>
                <Key $w={69} $tone="light"><WinFace>Menu</WinFace></Key>
                <Key $tone="gray" $last><BottomCenter>Ctrl</BottomCenter></Key>
              </KeyRow>
            </Keyboard>
            <Caption>
              An example of the standard QWERTY keyboard arrangement. Common two-letter combinations were on opposite sides of the keyboard. <a>WIKIPEDIA</a>
            </Caption>
          </Figure>
          <BodyText>In 1874 Remington &amp; Sons manufactured the first commercial typewriter, called the Sholes and Glidden</BodyText>
        </Article>

        <Aside>
          <MondayAd>
            <AdCard>
              <TopStatus><i /><i /></TopStatus>
              <NextWeek>Next week</NextWeek>
              {board.map((r, i) => (
                <BoardRow key={i}>
                  <BoardName><i /></BoardName>
                  <BoardFace $c={r.face}><i /></BoardFace>
                  <BoardProgress><BoardFill style={{ width: `${r.fill}%` }} /></BoardProgress>
                  <BoardCell $c={r.a} />
                  <BoardCell $c={r.b} />
                  <BoardEnd />
                </BoardRow>
              ))}
            </AdCard>
            <MondayLogo>
              <MondayMark />
              <b>monday</b>
              <span>.com</span>
            </MondayLogo>
            <ShowButton>Show me how <ShowArrow size={14} strokeWidth={2.2} /></ShowButton>
          </MondayAd>
          <AdLabel>Advertisement</AdLabel>
          <ProjectsAd>
            <AdLine>Your</AdLine>
            <AdLine>projects</AdLine>
            <AdLine>deserve</AdLine>
            <AdLine $bold>better.</AdLine>
            <AdStub />
            <AdChoices>
              <AdChoice><Info size={16} strokeWidth={1.8} /></AdChoice>
              <AdChoice><X size={18} strokeWidth={2} /></AdChoice>
            </AdChoices>
          </ProjectsAd>
        </Aside>

        <Scrollbar>
          <ScrollUp />
          <ScrollThumb />
          <ScrollDown />
        </Scrollbar>
      </Main>

      <Taskbar>
        <Weather>
          <SunCloud />
          <WeatherBadge>1</WeatherBadge>
          <WeatherText>
            <span>81°F</span>
            <small>Mostly sunny</small>
          </WeatherText>
        </Weather>
        <WindowsLogo />
        <SearchBox>
          <SearchIcon size={21} strokeWidth={2} color="#222" />
          Search
          <VacuumArt />
        </SearchBox>
        <TaskSlot><TaskViewIcon /></TaskSlot>
        <TaskSlot><MeetIcon /></TaskSlot>
        <TaskSlot $active><ChromeColor /><ActiveBar /></TaskSlot>
        <TaskSlot><FolderIcon /></TaskSlot>
        <TaskSlot><StoreIcon /></TaskSlot>
        <TaskSlot><XboxIcon /></TaskSlot>
        <TaskSlot><PurpleApp /></TaskSlot>
        <TaskSlot><StickyIcon /><RunDot /></TaskSlot>
        <TaskSlot><ChartApp /><RunDot /></TaskSlot>
        <TaskSlot><WordIcon /><RunDot /></TaskSlot>
        <TaskSlot><GearIcon /><RunDot /></TaskSlot>
        <Tray>
          <TrayItem $ml={0}><ChevronUp size={21} strokeWidth={2} /></TrayItem>
          <Lang>ENG</Lang>
          <TrayItem $ml={22}><Wifi size={21} strokeWidth={2} /></TrayItem>
          <TrayItem $ml={10}><Volume2 size={21} strokeWidth={1.7} /></TrayItem>
          <TrayItem $ml={8}><BatteryIcon /></TrayItem>
          <Clock>
            <span>1:51 PM</span>
            <span>6/27/2023</span>
          </Clock>
          <NotifBadge>6</NotifBadge>
        </Tray>
      </Taskbar>
    </Page>
  );
}
